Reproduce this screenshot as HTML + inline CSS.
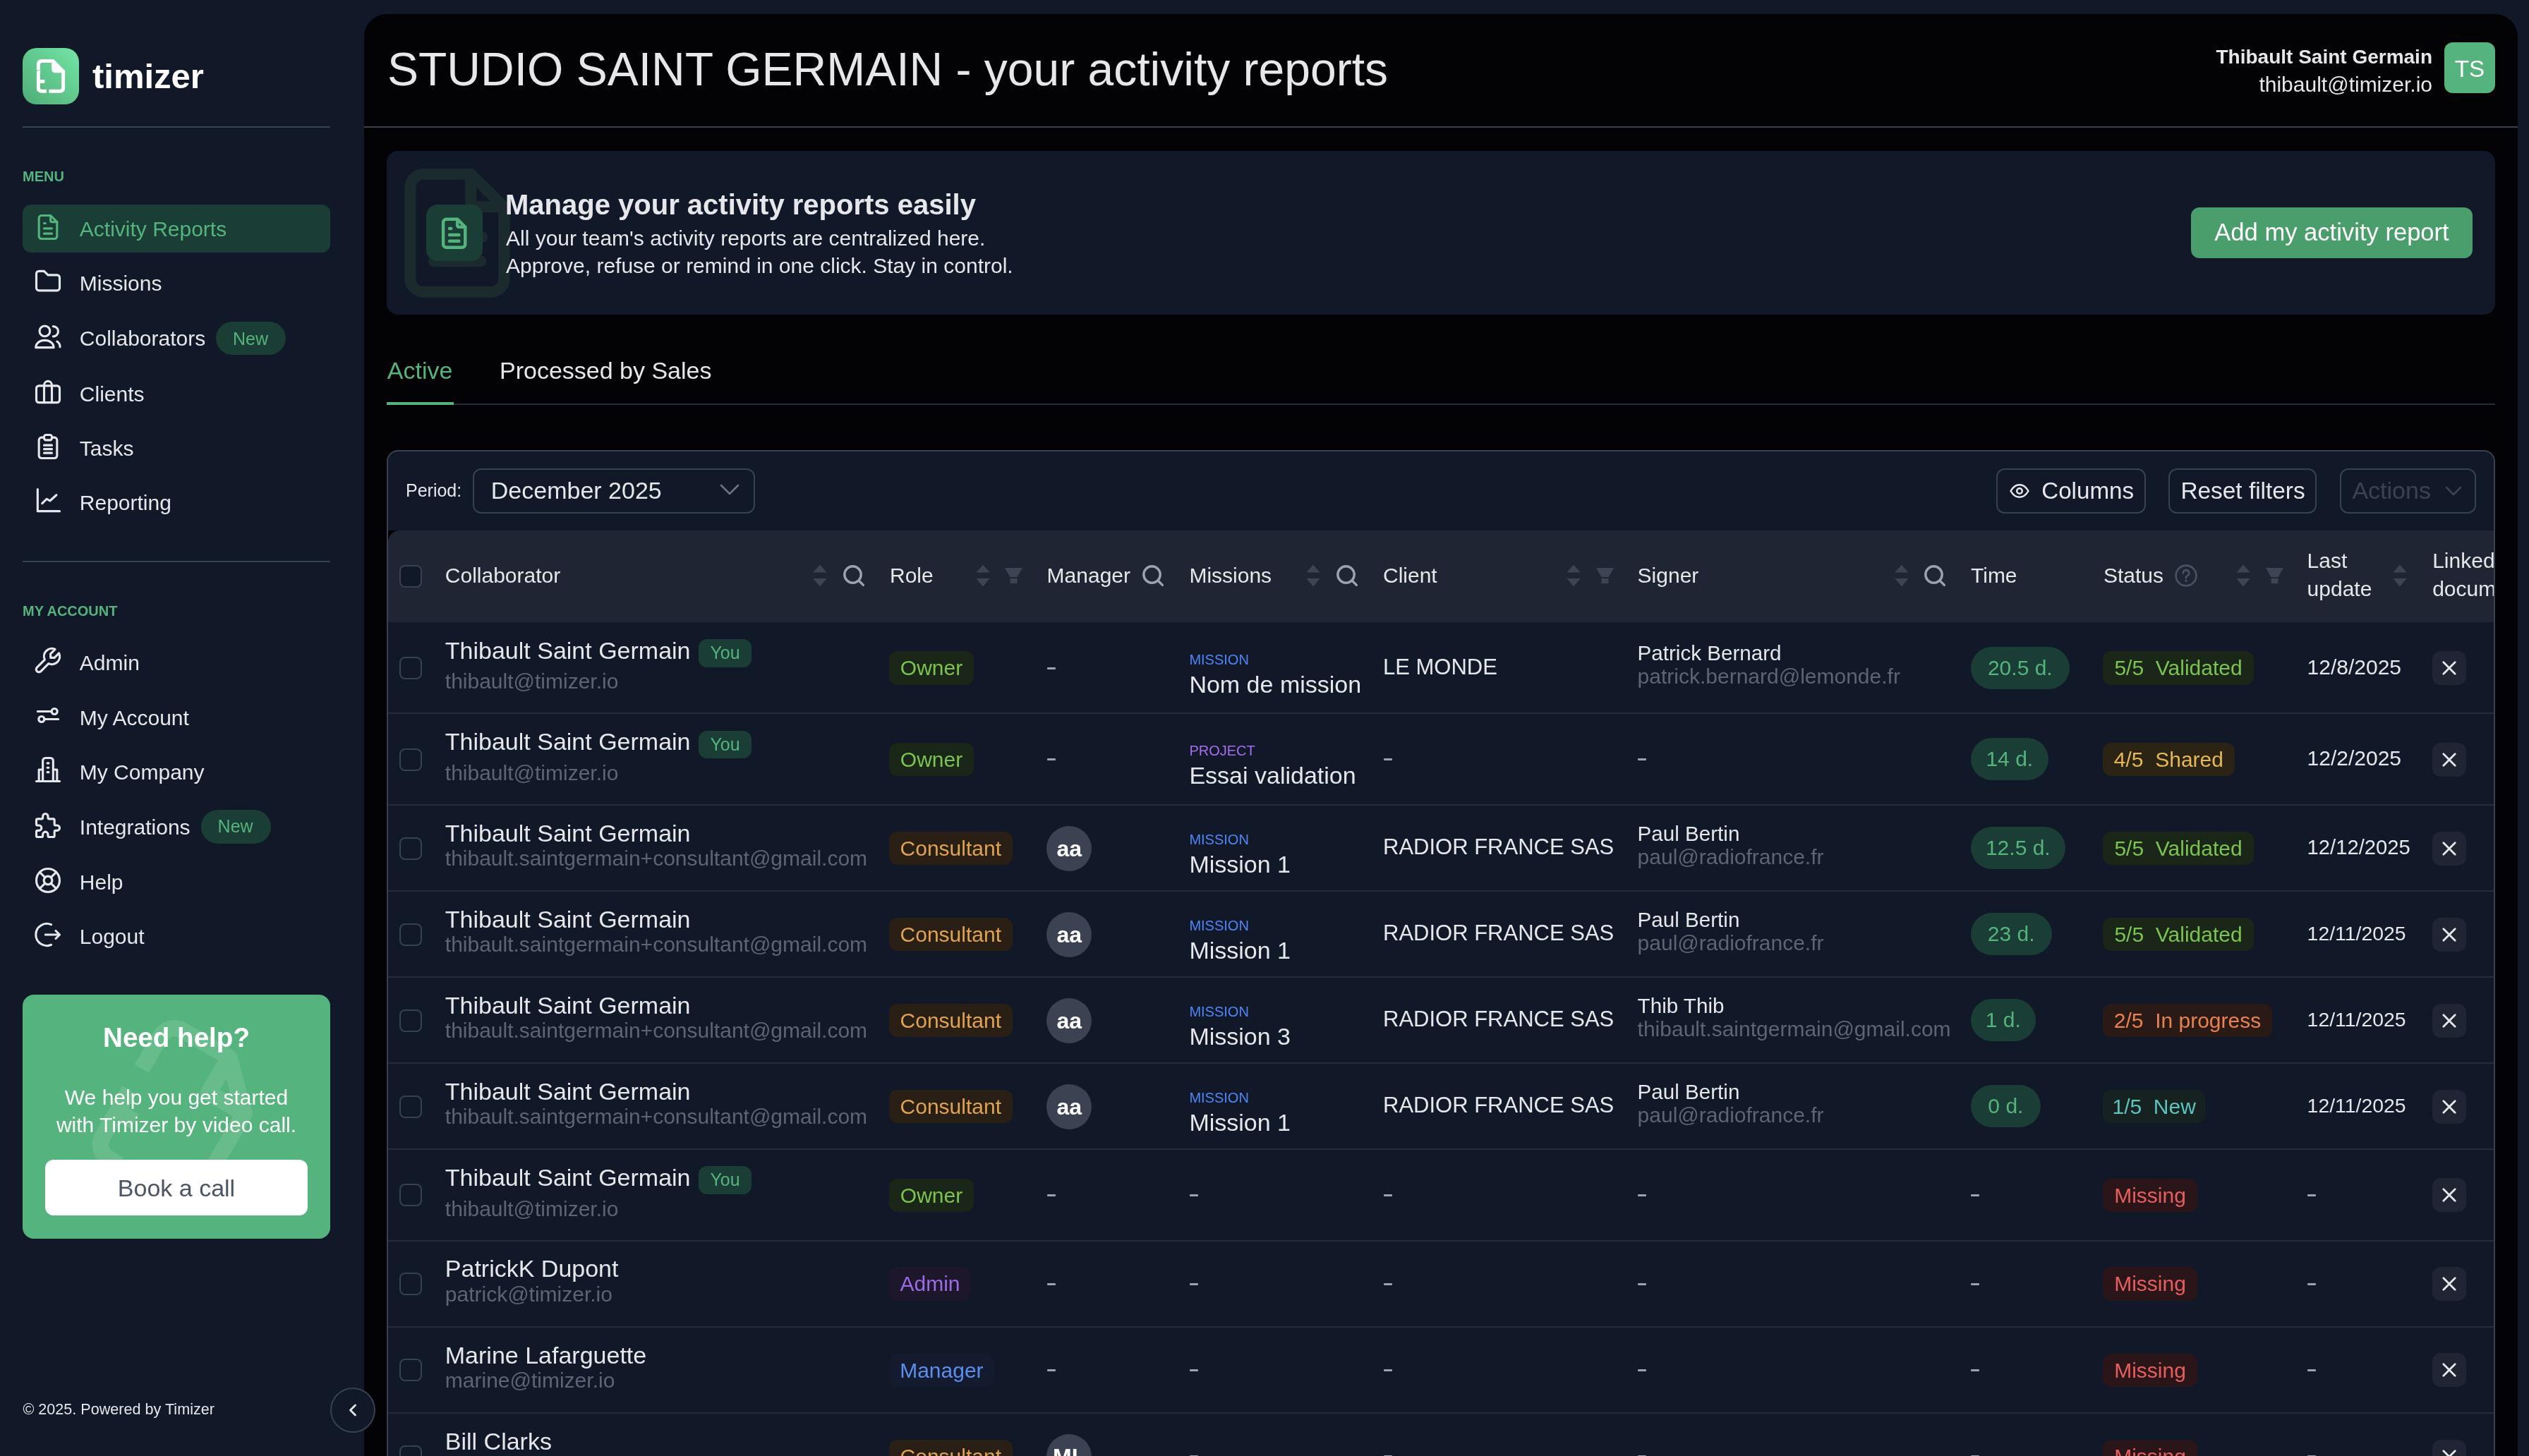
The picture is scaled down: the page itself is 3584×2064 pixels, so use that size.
<!DOCTYPE html>
<html><head><meta charset="utf-8"><title>Timizer</title>
<style>
html,body{margin:0;padding:0;}
body{width:100vw;height:100vh;overflow:hidden;background:#111827;}
#root{will-change:transform;zoom:1;position:relative;width:1792px;height:1032px;overflow:hidden;background:#111827;font-family:"Liberation Sans",sans-serif;}
@media (min-width:2400px){#root{zoom:2;}}
.t{position:absolute;white-space:nowrap;}
svg{display:block;}
</style></head><body><div id="root">
<div style="position:absolute;left:16.00px;top:34.00px;width:40.00px;height:40.00px;border-radius:10px;background:linear-gradient(45deg,#4fac77 0%,#62cb8f 55%,#75e6a7 100%);"></div>
<svg style="position:absolute;left:0;top:0" width="80" height="80" viewBox="0 0 80 80" fill="none"><g stroke="#fff" stroke-width="2.5" stroke-linejoin="round"><path d="M27.2 49.7V45.8Q27.2 43.3 29.7 43.3H37.6"/><path d="M44.8 50.2V62.1Q44.8 64.6 42.3 64.6H34.7"/><path d="M33.0 64.6H29.7Q27.2 64.6 27.2 62.1V51.3H28.6"/><path d="M27.2 57.7H31.7"/></g><path d="M36.6 41.95H38.0L46.05 50.1V51.6H39.2Q36.6 51.6 36.6 49.0Z" fill="#fff"/></svg>
<div class="t" style="left:65.50px;top:38.85px;font-size:24.5px;line-height:30.62px;color:#ffffff;font-weight:700;">timizer</div>
<div style="position:absolute;left:16.00px;top:89.50px;width:218.00px;height:1.00px;background:#374151;"></div>
<div class="t" style="left:16.00px;top:118.98px;font-size:10px;line-height:12.5px;color:#55b47d;font-weight:700;">MENU</div>
<div style="position:absolute;left:16.00px;top:145.00px;width:218.00px;height:34.20px;border-radius:6px;background:#1a3d35;"></div>
<svg style="position:absolute;left:23.20px;top:150.00px;" width="22" height="22" viewBox="0 0 24 24" fill="none"><g stroke="#55b47d" stroke-width="1.7" stroke-linecap="round" stroke-linejoin="round"><path d="M14 3v4a1 1 0 0 0 1 1h4"/><path d="M17 21H7a2 2 0 0 1-2-2V5a2 2 0 0 1 2-2h7l5 5v11a2 2 0 0 1-2 2z"/><path d="M9 9h1M9 13h6M9 17h6"/></g></svg>
<div class="t" style="left:56.40px;top:152.92px;font-size:15px;line-height:18.75px;color:#55b47d;font-weight:400;">Activity Reports</div>
<svg style="position:absolute;left:23.20px;top:188.50px;" width="22" height="22" viewBox="0 0 24 24" fill="none"><path d="M5 4h4l3 3h7a2 2 0 0 1 2 2v8a2 2 0 0 1-2 2H5a2 2 0 0 1-2-2V6a2 2 0 0 1 2-2" stroke="#e5e7eb" stroke-width="1.7" stroke-linejoin="round"/></svg>
<div class="t" style="left:56.40px;top:191.62px;font-size:15px;line-height:18.75px;color:#e5e7eb;font-weight:400;">Missions</div>
<svg style="position:absolute;left:23.20px;top:228.00px;" width="22" height="22" viewBox="0 0 24 24" fill="none"><g stroke="#e5e7eb" stroke-width="1.7" stroke-linecap="round" stroke-linejoin="round"><circle cx="9.5" cy="7.3" r="4"/><path d="M2.6 20c0-3.4 3.1-5.6 6.9-5.6s6.9 2.2 6.9 5.6z"/><path d="M16 3.6a3.9 3.9 0 0 1 0 7.8"/><path d="M19 15.3c1.4.9 2.3 2.3 2.3 4.2"/></g></svg>
<div class="t" style="left:56.40px;top:230.42px;font-size:15px;line-height:18.75px;color:#e5e7eb;font-weight:400;">Collaborators</div>
<svg style="position:absolute;left:23.20px;top:267.00px;" width="22" height="22" viewBox="0 0 24 24" fill="none"><g stroke="#e5e7eb" stroke-width="1.7" stroke-linecap="round" stroke-linejoin="round"><rect x="3" y="7" width="18" height="13" rx="2"/><path d="M9 20V6.5a3 3 0 0 1 6 0V20"/></g></svg>
<div class="t" style="left:56.40px;top:269.82px;font-size:15px;line-height:18.75px;color:#e5e7eb;font-weight:400;">Clients</div>
<svg style="position:absolute;left:23.20px;top:305.60px;" width="22" height="22" viewBox="0 0 24 24" fill="none"><g stroke="#e5e7eb" stroke-width="1.7" stroke-linecap="round" stroke-linejoin="round"><path d="M9 5H7a2 2 0 0 0-2 2v12a2 2 0 0 0 2 2h10a2 2 0 0 0 2-2V7a2 2 0 0 0-2-2h-2"/><rect x="9" y="3" width="6" height="4" rx="1.5"/><path d="M9 11h6M9 14h6M9 17h6"/></g></svg>
<div class="t" style="left:56.40px;top:308.52px;font-size:15px;line-height:18.75px;color:#e5e7eb;font-weight:400;">Tasks</div>
<svg style="position:absolute;left:23.20px;top:344.20px;" width="22" height="22" viewBox="0 0 24 24" fill="none"><g stroke="#e5e7eb" stroke-width="1.7" stroke-linecap="round" stroke-linejoin="round"><path d="M4 3v17h17"/><path d="M7.5 14l3.5-3.5 2.5 1.5 5-4.5"/></g></svg>
<div class="t" style="left:56.40px;top:347.22px;font-size:15px;line-height:18.75px;color:#e5e7eb;font-weight:400;">Reporting</div>
<div style="position:absolute;left:153.20px;top:228.20px;width:49.10px;height:23.50px;border-radius:12px;background:#1a3d35;"></div>
<div class="t" style="left:165.00px;top:232.36px;font-size:12.5px;line-height:15.62px;color:#55b47d;font-weight:400;">New</div>
<div style="position:absolute;left:16.00px;top:397.50px;width:218.00px;height:1.00px;background:#374151;"></div>
<div class="t" style="left:16.00px;top:426.78px;font-size:10px;line-height:12.5px;color:#55b47d;font-weight:700;">MY ACCOUNT</div>
<svg style="position:absolute;left:23.20px;top:457.10px;" width="22" height="22" viewBox="0 0 24 24" fill="none"><path d="M7 10h3V7L6.5 3.5a6 6 0 0 1 8 8l6 6a2 2 0 0 1-3 3l-6-6a6 6 0 0 1-8-8L7 10" stroke="#e5e7eb" stroke-width="1.7" stroke-linecap="round" stroke-linejoin="round" transform="scale(-1,1) translate(-24,0)"/></svg>
<div class="t" style="left:56.40px;top:460.67px;font-size:15px;line-height:18.75px;color:#e5e7eb;font-weight:400;">Admin</div>
<svg style="position:absolute;left:23.20px;top:496.00px;" width="22" height="22" viewBox="0 0 24 24" fill="none"><g stroke="#e5e7eb" stroke-width="1.7" stroke-linecap="round"><circle cx="17" cy="9" r="2.2"/><circle cx="7" cy="15" r="2.2"/><path d="M4 9h10.8M9.2 15H20"/></g></svg>
<div class="t" style="left:56.40px;top:499.42px;font-size:15px;line-height:18.75px;color:#e5e7eb;font-weight:400;">My Account</div>
<svg style="position:absolute;left:23.20px;top:534.50px;" width="22" height="22" viewBox="0 0 24 24" fill="none"><g stroke="#e5e7eb" stroke-width="1.7" stroke-linecap="round" stroke-linejoin="round"><path d="M3 21h18"/><path d="M5 21v-9h3"/><path d="M19 21v-9h-3"/><path d="M8 21V5a2 2 0 0 1 2-2h4a2 2 0 0 1 2 2v16"/><path d="M11.5 7h1M11.5 10.5h1M11.5 14h1"/></g></svg>
<div class="t" style="left:56.40px;top:538.17px;font-size:15px;line-height:18.75px;color:#e5e7eb;font-weight:400;">My Company</div>
<svg style="position:absolute;left:23.20px;top:574.00px;" width="22" height="22" viewBox="0 0 24 24" fill="none"><path d="M4 7h3a1 1 0 0 0 1-1V5a2 2 0 0 1 4 0v1a1 1 0 0 0 1 1h3a1 1 0 0 1 1 1v3a1 1 0 0 0 1 1h1a2 2 0 0 1 0 4h-1a1 1 0 0 0-1 1v3a1 1 0 0 1-1 1h-3a1 1 0 0 1-1-1v-1a2 2 0 0 0-4 0v1a1 1 0 0 1-1 1H4a1 1 0 0 1-1-1v-3a1 1 0 0 1 1-1h1a2 2 0 0 0 0-4H4a1 1 0 0 1-1-1V8a1 1 0 0 1 1-1" stroke="#e5e7eb" stroke-width="1.7" stroke-linejoin="round"/></svg>
<div class="t" style="left:56.40px;top:576.92px;font-size:15px;line-height:18.75px;color:#e5e7eb;font-weight:400;">Integrations</div>
<svg style="position:absolute;left:23.20px;top:613.00px;" width="22" height="22" viewBox="0 0 24 24" fill="none"><g stroke="#e5e7eb" stroke-width="1.7" stroke-linecap="round"><circle cx="12" cy="12" r="9"/><circle cx="12" cy="12" r="3.2"/><path d="M14.3 14.3l4.1 4.1M9.7 14.3l-4.1 4.1M9.7 9.7L5.6 5.6M14.3 9.7l4.1-4.1"/></g></svg>
<div class="t" style="left:56.40px;top:616.17px;font-size:15px;line-height:18.75px;color:#e5e7eb;font-weight:400;">Help</div>
<svg style="position:absolute;left:23.20px;top:651.50px;" width="22" height="22" viewBox="0 0 24 24" fill="none"><g stroke="#e5e7eb" stroke-width="1.7" stroke-linecap="round" stroke-linejoin="round"><path d="M14.5 4.2A8.5 8.5 0 1 0 14.5 19.8"/><path d="M10 12h11M18 9l3 3-3 3"/></g></svg>
<div class="t" style="left:56.40px;top:654.42px;font-size:15px;line-height:18.75px;color:#e5e7eb;font-weight:400;">Logout</div>
<div style="position:absolute;left:142.50px;top:574.00px;width:49.50px;height:23.75px;border-radius:12px;background:#1a3d35;"></div>
<div class="t" style="left:154.30px;top:578.16px;font-size:12.5px;line-height:15.62px;color:#55b47d;font-weight:400;">New</div>
<div style="position:absolute;left:16px;top:705px;width:218px;height:173px;border-radius:8px;background:#55b47d;overflow:hidden"><svg style="position:absolute;left:40px;top:14px" width="140" height="140" viewBox="0 0 24 24" fill="none"><g transform="rotate(30 12 12)" stroke="#fff" opacity="0.11" stroke-width="2.0" stroke-linecap="butt" stroke-linejoin="round"><path d="M5.5 9.5V5a2 2 0 0 1 2-2h6.5l5 5v11a2 2 0 0 1-2 2h-5.5"/><path d="M14 3v5h5"/><path d="M5.5 12.5V19a2 2 0 0 0 2 2h1.5"/><path d="M5.5 15.5h2.5"/></g></svg></div>
<div class="t" style="left:25.00px;width:200px;text-align:center;top:723.25px;font-size:19.3px;line-height:24.12px;color:#ffffff;font-weight:700;">Need help?</div>
<div class="t" style="left:20.00px;width:210px;text-align:center;top:768.42px;font-size:15px;line-height:18.75px;color:#ffffff;font-weight:400;">We help you get started</div>
<div class="t" style="left:20.00px;width:210px;text-align:center;top:788.12px;font-size:15px;line-height:18.75px;color:#ffffff;font-weight:400;">with Timizer by video call.</div>
<div style="position:absolute;left:32.00px;top:822.10px;width:186.00px;height:39.60px;border-radius:6px;background:#ffffff;"></div>
<div class="t" style="left:32.00px;width:186px;text-align:center;top:831.28px;font-size:17px;line-height:21.25px;color:#4b5563;font-weight:400;">Book a call</div>
<div class="t" style="left:16.20px;top:991.91px;font-size:10.8px;line-height:13.5px;color:#e5e7eb;font-weight:400;">© 2025. Powered by Timizer</div>
<div style="position:absolute;left:258.00px;top:10.00px;width:1526.00px;height:1100.00px;border-radius:16px 16px 0 0;background:#030305;"></div>
<div style="position:absolute;left:258.00px;top:89.50px;width:1526.00px;height:1.00px;background:#374151;"></div>
<div class="t" style="left:274.50px;top:28.73px;font-size:33px;line-height:41.25px;color:#e5e7eb;font-weight:400;">STUDIO SAINT GERMAIN - your activity reports</div>
<div class="t" style="right:68.50px;text-align:right;top:31.65px;font-size:14px;line-height:17.5px;color:#e5e7eb;font-weight:700;">Thibault Saint Germain</div>
<div class="t" style="right:68.50px;text-align:right;top:50.42px;font-size:15px;line-height:18.75px;color:#e5e7eb;font-weight:400;">thibault@timizer.io</div>
<div style="position:absolute;left:1732.00px;top:30.00px;width:36.00px;height:36.00px;border-radius:6px;background:#55b47d;"></div>
<div class="t" style="left:1732.00px;width:36px;text-align:center;top:38.27px;font-size:16.6px;line-height:20.75px;color:#ffffff;font-weight:400;">TS</div>
<div style="position:absolute;left:274px;top:107px;width:1494px;height:116px;border-radius:8px;background:#111827;overflow:hidden"></div>
<svg style="position:absolute;left:266.75px;top:109.6px" width="114" height="111.4" viewBox="0 0 24 24" preserveAspectRatio="none" fill="none"><g stroke="#1b2b2d" stroke-width="1.7" stroke-linecap="round" stroke-linejoin="round"><path d="M14 3v4a1 1 0 0 0 1 1h4"/><path d="M17 21H7a2 2 0 0 1-2-2V5a2 2 0 0 1 2-2h7l5 5v11a2 2 0 0 1-2 2z"/><path d="M8.5 12.6h7.2M8.5 16.3h7"/></g></svg>
<div style="position:absolute;left:302.00px;top:145.00px;width:40.00px;height:40.00px;border-radius:8px;background:#1a3d35;"></div>
<svg style="position:absolute;left:308.65px;top:151.80px;" width="26.7" height="26.7" viewBox="0 0 24 24" fill="none"><g stroke="#55b47d" stroke-width="2" stroke-linecap="round" stroke-linejoin="round"><path d="M14 3v4a1 1 0 0 0 1 1h4"/><path d="M17 21H7a2 2 0 0 1-2-2V5a2 2 0 0 1 2-2h7l5 5v11a2 2 0 0 1-2 2z"/><path d="M9 9h1M9 13h6M9 17h6"/></g></svg>
<div class="t" style="left:358.00px;top:132.37px;font-size:20px;line-height:25.0px;color:#e5e7eb;font-weight:700;">Manage your activity reports easily</div>
<div class="t" style="left:358.50px;top:159.42px;font-size:15px;line-height:18.75px;color:#e5e7eb;font-weight:400;">All your team&#39;s activity reports are centralized here.</div>
<div class="t" style="left:358.50px;top:179.12px;font-size:15px;line-height:18.75px;color:#e5e7eb;font-weight:400;">Approve, refuse or remind in one click. Stay in control.</div>
<div style="position:absolute;left:1552.50px;top:147.00px;width:199.50px;height:36.00px;border-radius:6px;background:#4a9e6b;"></div>
<div class="t" style="left:1552.50px;width:199.5px;text-align:center;top:153.79px;font-size:17.3px;line-height:21.62px;color:#ffffff;font-weight:400;">Add my activity report</div>
<div class="t" style="left:274.40px;top:251.98px;font-size:17px;line-height:21.25px;color:#55b47d;font-weight:400;">Active</div>
<div class="t" style="left:354.00px;top:251.98px;font-size:17px;line-height:21.25px;color:#e5e7eb;font-weight:400;">Processed by Sales</div>
<div style="position:absolute;left:274.00px;top:286.00px;width:1494.00px;height:1.00px;background:#252c39;"></div>
<div style="position:absolute;left:274.00px;top:285.00px;width:47.50px;height:2.00px;background:#55b47d;"></div>
<div style="position:absolute;left:274px;top:319px;width:1494px;height:800px;border-radius:8px;border:1px solid #394150;box-sizing:border-box;background:#111827;"></div>
<div class="t" style="left:287.50px;top:340.11px;font-size:12.5px;line-height:15.62px;color:#e5e7eb;font-weight:400;">Period:</div>
<div style="position:absolute;left:335.00px;top:332.00px;width:200.00px;height:32.00px;border-radius:6px;border:1px solid #374151;box-sizing:border-box;"></div>
<div class="t" style="left:347.90px;top:337.23px;font-size:17px;line-height:21.25px;color:#e5e7eb;font-weight:400;">December 2025</div>
<svg style="position:absolute;left:510.00px;top:342.00px;" width="14" height="10" viewBox="0 0 14 10" fill="none"><path d="M1 2l6 6 6-6" stroke="#6b7280" stroke-width="1.3" stroke-linecap="round" stroke-linejoin="round"/></svg>
<div style="position:absolute;left:1414.30px;top:332.00px;width:106.00px;height:32.00px;border-radius:6px;border:1px solid #374151;box-sizing:border-box;"></div>
<svg style="position:absolute;left:1423.50px;top:340.50px;" width="15" height="15" viewBox="0 0 24 24" fill="none"><g stroke="#e5e7eb" stroke-width="2" stroke-linecap="round" stroke-linejoin="round"><circle cx="12" cy="12" r="3"/><path d="M22 12c-2.7 4.7-6 7-10 7s-7.3-2.3-10-7c2.7-4.7 6-7 10-7s7.3 2.3 10 7"/></g></svg>
<div class="t" style="left:1446.60px;top:337.37px;font-size:16.6px;line-height:20.75px;color:#e5e7eb;font-weight:400;">Columns</div>
<div style="position:absolute;left:1536.60px;top:332.00px;width:105.10px;height:32.00px;border-radius:6px;border:1px solid #374151;box-sizing:border-box;"></div>
<div class="t" style="left:1545.20px;top:337.27px;font-size:16.7px;line-height:20.88px;color:#e5e7eb;font-weight:400;">Reset filters</div>
<div style="position:absolute;left:1658.10px;top:332.00px;width:96.60px;height:32.00px;border-radius:6px;border:1px solid #374151;box-sizing:border-box;"></div>
<div class="t" style="left:1666.70px;top:336.98px;font-size:17px;line-height:21.25px;color:#3b4250;font-weight:400;">Actions</div>
<svg style="position:absolute;left:1732.50px;top:344.00px;" width="12" height="8" viewBox="0 0 12 8" fill="none"><path d="M1 1.5l5 5 5-5" stroke="#3b4250" stroke-width="1.3" stroke-linecap="round" stroke-linejoin="round"/></svg>
<div style="position:absolute;left:275.00px;top:376.00px;width:1492.00px;height:65.00px;background:#000000;"></div>
<div style="position:absolute;left:275.00px;top:376.00px;width:1492.00px;height:65.00px;background:#1f2532;border-radius:8px 0 0 0;"></div>
<div style="position:absolute;left:283.00px;top:400.40px;width:16.00px;height:16.00px;border-radius:4px;border:1px solid #374151;box-sizing:border-box;background:#111827;"></div>
<div class="t" style="left:315.40px;top:398.42px;font-size:15px;line-height:18.75px;color:#e5e7eb;font-weight:400;">Collaborator</div>
<svg style="position:absolute;left:576.00px;top:400.00px;" width="10" height="16" viewBox="0 0 10 16" fill="none"><path d="M5 0.2L9.8 5.8H0.2z M5 15.8L9.8 10H0.2z" fill="#3d4453"/></svg>
<svg style="position:absolute;left:597.00px;top:400.00px;" width="16" height="16" viewBox="0 0 16 16" fill="none"><circle cx="7.25" cy="7.25" r="5.85" stroke="#9ca3af" stroke-width="1.7"/><path d="M11.5 11.5l3.2 3.2" stroke="#9ca3af" stroke-width="1.7" stroke-linecap="round"/></svg>
<div class="t" style="left:630.50px;top:398.42px;font-size:15px;line-height:18.75px;color:#e5e7eb;font-weight:400;">Role</div>
<svg style="position:absolute;left:691.40px;top:400.00px;" width="10" height="16" viewBox="0 0 10 16" fill="none"><path d="M5 0.2L9.8 5.8H0.2z M5 15.8L9.8 10H0.2z" fill="#3d4453"/></svg>
<svg style="position:absolute;left:712.15px;top:402.50px;" width="12.5" height="11" viewBox="0 0 12.5 11" fill="none"><path d="M0 0h12.5L8.8 6.5H3.7z" fill="#3d4453"/><rect x="3.75" y="7.5" width="5" height="3.5" fill="#3d4453"/></svg>
<div class="t" style="left:741.80px;top:398.42px;font-size:15px;line-height:18.75px;color:#e5e7eb;font-weight:400;">Manager</div>
<svg style="position:absolute;left:809.00px;top:400.00px;" width="16" height="16" viewBox="0 0 16 16" fill="none"><circle cx="7.25" cy="7.25" r="5.85" stroke="#9ca3af" stroke-width="1.7"/><path d="M11.5 11.5l3.2 3.2" stroke="#9ca3af" stroke-width="1.7" stroke-linecap="round"/></svg>
<div class="t" style="left:842.70px;top:398.42px;font-size:15px;line-height:18.75px;color:#e5e7eb;font-weight:400;">Missions</div>
<svg style="position:absolute;left:925.50px;top:400.00px;" width="10" height="16" viewBox="0 0 10 16" fill="none"><path d="M5 0.2L9.8 5.8H0.2z M5 15.8L9.8 10H0.2z" fill="#3d4453"/></svg>
<svg style="position:absolute;left:946.30px;top:400.00px;" width="16" height="16" viewBox="0 0 16 16" fill="none"><circle cx="7.25" cy="7.25" r="5.85" stroke="#9ca3af" stroke-width="1.7"/><path d="M11.5 11.5l3.2 3.2" stroke="#9ca3af" stroke-width="1.7" stroke-linecap="round"/></svg>
<div class="t" style="left:980.00px;top:398.42px;font-size:15px;line-height:18.75px;color:#e5e7eb;font-weight:400;">Client</div>
<svg style="position:absolute;left:1110.00px;top:400.00px;" width="10" height="16" viewBox="0 0 10 16" fill="none"><path d="M5 0.2L9.8 5.8H0.2z M5 15.8L9.8 10H0.2z" fill="#3d4453"/></svg>
<svg style="position:absolute;left:1130.75px;top:402.50px;" width="12.5" height="11" viewBox="0 0 12.5 11" fill="none"><path d="M0 0h12.5L8.8 6.5H3.7z" fill="#3d4453"/><rect x="3.75" y="7.5" width="5" height="3.5" fill="#3d4453"/></svg>
<div class="t" style="left:1160.30px;top:398.42px;font-size:15px;line-height:18.75px;color:#e5e7eb;font-weight:400;">Signer</div>
<svg style="position:absolute;left:1342.30px;top:400.00px;" width="10" height="16" viewBox="0 0 10 16" fill="none"><path d="M5 0.2L9.8 5.8H0.2z M5 15.8L9.8 10H0.2z" fill="#3d4453"/></svg>
<svg style="position:absolute;left:1363.10px;top:400.00px;" width="16" height="16" viewBox="0 0 16 16" fill="none"><circle cx="7.25" cy="7.25" r="5.85" stroke="#9ca3af" stroke-width="1.7"/><path d="M11.5 11.5l3.2 3.2" stroke="#9ca3af" stroke-width="1.7" stroke-linecap="round"/></svg>
<div class="t" style="left:1396.50px;top:398.42px;font-size:15px;line-height:18.75px;color:#e5e7eb;font-weight:400;">Time</div>
<div class="t" style="left:1490.50px;top:398.42px;font-size:15px;line-height:18.75px;color:#e5e7eb;font-weight:400;">Status</div>
<svg style="position:absolute;left:1541.00px;top:400.00px;" width="16" height="16" viewBox="0 0 16 16" fill="none"><circle cx="8" cy="8" r="7.2" stroke="#4b5263" stroke-width="1.3"/><path d="M5.9 6.2a2.1 2.1 0 1 1 3 1.9c-.6.3-.9.7-.9 1.3v.4" stroke="#4b5263" stroke-width="1.3" stroke-linecap="round"/><circle cx="8" cy="11.7" r=".8" fill="#4b5263"/></svg>
<svg style="position:absolute;left:1584.50px;top:400.00px;" width="10" height="16" viewBox="0 0 10 16" fill="none"><path d="M5 0.2L9.8 5.8H0.2z M5 15.8L9.8 10H0.2z" fill="#3d4453"/></svg>
<svg style="position:absolute;left:1605.25px;top:402.50px;" width="12.5" height="11" viewBox="0 0 12.5 11" fill="none"><path d="M0 0h12.5L8.8 6.5H3.7z" fill="#3d4453"/><rect x="3.75" y="7.5" width="5" height="3.5" fill="#3d4453"/></svg>
<div class="t" style="left:1634.80px;top:388.17px;font-size:15px;line-height:18.75px;color:#e5e7eb;font-weight:400;">Last</div>
<div class="t" style="left:1634.80px;top:408.02px;font-size:15px;line-height:18.75px;color:#e5e7eb;font-weight:400;">update</div>
<svg style="position:absolute;left:1695.40px;top:400.00px;" width="10" height="16" viewBox="0 0 10 16" fill="none"><path d="M5 0.2L9.8 5.8H0.2z M5 15.8L9.8 10H0.2z" fill="#3d4453"/></svg>
<div style="position:absolute;left:1700px;top:376px;width:67px;height:65px;overflow:hidden">
<div class="t" style="left:23.60px;top:12.17px;font-size:15px;line-height:18.75px;color:#e5e7eb;font-weight:400;">Linked</div>
<div class="t" style="left:23.60px;top:32.02px;font-size:15px;line-height:18.75px;color:#e5e7eb;font-weight:400;">documents</div>
</div>
<div style="position:absolute;left:283.00px;top:465.55px;width:16.00px;height:16.00px;border-radius:4px;border:1px solid #374151;box-sizing:border-box;background:#111827;"></div>
<div class="t" style="left:315.40px;top:450.48px;font-size:17px;line-height:21.25px;color:#e5e7eb;font-weight:400;">Thibault Saint Germain</div>
<div class="t" style="left:315.40px;top:473.62px;font-size:15px;line-height:18.75px;color:#5d6472;font-weight:400;">thibault@timizer.io</div>
<div class="t" style="left:495.00px;top:453.10px;width:37.5px;text-align:center;height:19.7px;line-height:19.7px;border-radius:6px;background:#1a3d35;color:#55b47d;font-size:12.5px;">You</div>
<div class="t" style="left:630.00px;top:461.70px;width:60px;text-align:center;height:23.7px;line-height:23.7px;border-radius:6px;background:#1a2617;color:#7cc34f;font-size:15px;">Owner</div>
<div style="position:absolute;left:742.20px;top:472.80px;width:5.80px;height:1.50px;background:#9ca3af;border-radius:0.5px;"></div>
<div class="t" style="left:842.70px;top:461.33px;font-size:10px;line-height:12.5px;color:#4f86f7;font-weight:400;">MISSION</div>
<div class="t" style="left:842.70px;top:474.33px;font-size:17px;line-height:21.25px;color:#e5e7eb;font-weight:400;">Nom de mission</div>
<div class="t" style="left:980.00px;top:463.44px;font-size:15.5px;line-height:19.38px;color:#e5e7eb;font-weight:400;">LE MONDE</div>
<div class="t" style="left:1160.30px;top:453.52px;font-size:14.8px;line-height:18.5px;color:#e5e7eb;font-weight:400;">Patrick Bernard</div>
<div class="t" style="left:1160.30px;top:470.17px;font-size:15px;line-height:18.75px;color:#5d6472;font-weight:400;">patrick.bernard@lemonde.fr</div>
<div class="t" style="left:1396.4px;top:458.25px;width:70px;text-align:center;height:30px;line-height:30px;border-radius:15px;background:#1a3d35;color:#55b47d;font-size:15px;">20.5 d.</div>
<div class="t" style="left:1490.00px;top:461.70px;width:107px;text-align:center;height:23.7px;line-height:23.7px;border-radius:6px;background:#1a2617;color:#7cc34f;font-size:15px;">5/5&nbsp; Validated</div>
<div class="t" style="left:1634.80px;top:463.27px;font-size:15px;line-height:18.75px;color:#e5e7eb;font-weight:400;">12/8/2025</div>
<div style="position:absolute;left:1723.50px;top:461.55px;width:24.00px;height:24.00px;border-radius:6px;background:#1f2532;"></div>
<svg style="position:absolute;left:1728.50px;top:466.55px;" width="14" height="14" viewBox="0 0 14 14" fill="none"><path d="M2.9 2.9l8.2 8.2M11.1 2.9l-8.2 8.2" stroke="#e5e7eb" stroke-width="1.4" stroke-linecap="round"/></svg>
<div style="position:absolute;left:275.00px;top:505.00px;width:1492.00px;height:1.00px;background:#252c39;"></div>
<div style="position:absolute;left:283.00px;top:530.30px;width:16.00px;height:16.00px;border-radius:4px;border:1px solid #374151;box-sizing:border-box;background:#111827;"></div>
<div class="t" style="left:315.40px;top:515.23px;font-size:17px;line-height:21.25px;color:#e5e7eb;font-weight:400;">Thibault Saint Germain</div>
<div class="t" style="left:315.40px;top:538.37px;font-size:15px;line-height:18.75px;color:#5d6472;font-weight:400;">thibault@timizer.io</div>
<div class="t" style="left:495.00px;top:517.85px;width:37.5px;text-align:center;height:19.7px;line-height:19.7px;border-radius:6px;background:#1a3d35;color:#55b47d;font-size:12.5px;">You</div>
<div class="t" style="left:630.00px;top:526.45px;width:60px;text-align:center;height:23.7px;line-height:23.7px;border-radius:6px;background:#1a2617;color:#7cc34f;font-size:15px;">Owner</div>
<div style="position:absolute;left:742.20px;top:537.55px;width:5.80px;height:1.50px;background:#9ca3af;border-radius:0.5px;"></div>
<div class="t" style="left:842.70px;top:526.08px;font-size:10px;line-height:12.5px;color:#a46df0;font-weight:400;">PROJECT</div>
<div class="t" style="left:842.70px;top:539.08px;font-size:17px;line-height:21.25px;color:#e5e7eb;font-weight:400;">Essai validation</div>
<div style="position:absolute;left:980.70px;top:537.55px;width:5.80px;height:1.50px;background:#9ca3af;border-radius:0.5px;"></div>
<div style="position:absolute;left:1160.70px;top:537.55px;width:5.80px;height:1.50px;background:#9ca3af;border-radius:0.5px;"></div>
<div class="t" style="left:1396.4px;top:523.00px;width:55px;text-align:center;height:30px;line-height:30px;border-radius:15px;background:#1a3d35;color:#55b47d;font-size:15px;">14 d.</div>
<div class="t" style="left:1490.00px;top:526.45px;width:93.4px;text-align:center;height:23.7px;line-height:23.7px;border-radius:6px;background:#2b2314;color:#e6b752;font-size:15px;">4/5&nbsp; Shared</div>
<div class="t" style="left:1634.80px;top:528.02px;font-size:15px;line-height:18.75px;color:#e5e7eb;font-weight:400;">12/2/2025</div>
<div style="position:absolute;left:1723.50px;top:526.30px;width:24.00px;height:24.00px;border-radius:6px;background:#1f2532;"></div>
<svg style="position:absolute;left:1728.50px;top:531.30px;" width="14" height="14" viewBox="0 0 14 14" fill="none"><path d="M2.9 2.9l8.2 8.2M11.1 2.9l-8.2 8.2" stroke="#e5e7eb" stroke-width="1.4" stroke-linecap="round"/></svg>
<div style="position:absolute;left:275.00px;top:570.00px;width:1492.00px;height:1.00px;background:#252c39;"></div>
<div style="position:absolute;left:283.00px;top:593.30px;width:16.00px;height:16.00px;border-radius:4px;border:1px solid #374151;box-sizing:border-box;background:#111827;"></div>
<div class="t" style="left:315.40px;top:579.98px;font-size:17px;line-height:21.25px;color:#e5e7eb;font-weight:400;">Thibault Saint Germain</div>
<div class="t" style="left:315.40px;top:599.22px;font-size:15px;line-height:18.75px;color:#5d6472;font-weight:400;">thibault.saintgermain+consultant@gmail.com</div>
<div class="t" style="left:630.00px;top:589.45px;width:87.3px;text-align:center;height:23.7px;line-height:23.7px;border-radius:6px;background:#2a1f15;color:#e0a352;font-size:15px;">Consultant</div>
<div style="position:absolute;left:741.60px;top:585.40px;width:32.00px;height:32.00px;border-radius:50%;background:#3b4252;"></div>
<div class="t" style="left:741.60px;width:32px;text-align:center;top:591.45px;font-size:16px;line-height:20.0px;color:#ffffff;font-weight:700;">aa</div>
<div class="t" style="left:842.70px;top:589.08px;font-size:10px;line-height:12.5px;color:#4f86f7;font-weight:400;">MISSION</div>
<div class="t" style="left:842.70px;top:602.08px;font-size:17px;line-height:21.25px;color:#e5e7eb;font-weight:400;">Mission 1</div>
<div class="t" style="left:980.00px;top:591.19px;font-size:15.5px;line-height:19.38px;color:#e5e7eb;font-weight:400;">RADIOR FRANCE SAS</div>
<div class="t" style="left:1160.30px;top:581.27px;font-size:14.8px;line-height:18.5px;color:#e5e7eb;font-weight:400;">Paul Bertin</div>
<div class="t" style="left:1160.30px;top:597.92px;font-size:15px;line-height:18.75px;color:#5d6472;font-weight:400;">paul@radiofrance.fr</div>
<div class="t" style="left:1396.4px;top:586.00px;width:67px;text-align:center;height:30px;line-height:30px;border-radius:15px;background:#1a3d35;color:#55b47d;font-size:15px;">12.5 d.</div>
<div class="t" style="left:1490.00px;top:589.45px;width:107px;text-align:center;height:23.7px;line-height:23.7px;border-radius:6px;background:#1a2617;color:#7cc34f;font-size:15px;">5/5&nbsp; Validated</div>
<div class="t" style="left:1634.80px;top:591.41px;font-size:14.6px;line-height:18.25px;color:#e5e7eb;font-weight:400;">12/12/2025</div>
<div style="position:absolute;left:1723.50px;top:589.30px;width:24.00px;height:24.00px;border-radius:6px;background:#1f2532;"></div>
<svg style="position:absolute;left:1728.50px;top:594.30px;" width="14" height="14" viewBox="0 0 14 14" fill="none"><path d="M2.9 2.9l8.2 8.2M11.1 2.9l-8.2 8.2" stroke="#e5e7eb" stroke-width="1.4" stroke-linecap="round"/></svg>
<div style="position:absolute;left:275.00px;top:631.00px;width:1492.00px;height:1.00px;background:#252c39;"></div>
<div style="position:absolute;left:283.00px;top:654.30px;width:16.00px;height:16.00px;border-radius:4px;border:1px solid #374151;box-sizing:border-box;background:#111827;"></div>
<div class="t" style="left:315.40px;top:640.98px;font-size:17px;line-height:21.25px;color:#e5e7eb;font-weight:400;">Thibault Saint Germain</div>
<div class="t" style="left:315.40px;top:660.22px;font-size:15px;line-height:18.75px;color:#5d6472;font-weight:400;">thibault.saintgermain+consultant@gmail.com</div>
<div class="t" style="left:630.00px;top:650.45px;width:87.3px;text-align:center;height:23.7px;line-height:23.7px;border-radius:6px;background:#2a1f15;color:#e0a352;font-size:15px;">Consultant</div>
<div style="position:absolute;left:741.60px;top:646.40px;width:32.00px;height:32.00px;border-radius:50%;background:#3b4252;"></div>
<div class="t" style="left:741.60px;width:32px;text-align:center;top:652.45px;font-size:16px;line-height:20.0px;color:#ffffff;font-weight:700;">aa</div>
<div class="t" style="left:842.70px;top:650.08px;font-size:10px;line-height:12.5px;color:#4f86f7;font-weight:400;">MISSION</div>
<div class="t" style="left:842.70px;top:663.08px;font-size:17px;line-height:21.25px;color:#e5e7eb;font-weight:400;">Mission 1</div>
<div class="t" style="left:980.00px;top:652.19px;font-size:15.5px;line-height:19.38px;color:#e5e7eb;font-weight:400;">RADIOR FRANCE SAS</div>
<div class="t" style="left:1160.30px;top:642.27px;font-size:14.8px;line-height:18.5px;color:#e5e7eb;font-weight:400;">Paul Bertin</div>
<div class="t" style="left:1160.30px;top:658.92px;font-size:15px;line-height:18.75px;color:#5d6472;font-weight:400;">paul@radiofrance.fr</div>
<div class="t" style="left:1396.4px;top:647.00px;width:57.4px;text-align:center;height:30px;line-height:30px;border-radius:15px;background:#1a3d35;color:#55b47d;font-size:15px;">23 d.</div>
<div class="t" style="left:1490.00px;top:650.45px;width:107px;text-align:center;height:23.7px;line-height:23.7px;border-radius:6px;background:#1a2617;color:#7cc34f;font-size:15px;">5/5&nbsp; Validated</div>
<div class="t" style="left:1634.80px;top:652.80px;font-size:14.2px;line-height:17.75px;color:#e5e7eb;font-weight:400;">12/11/2025</div>
<div style="position:absolute;left:1723.50px;top:650.30px;width:24.00px;height:24.00px;border-radius:6px;background:#1f2532;"></div>
<svg style="position:absolute;left:1728.50px;top:655.30px;" width="14" height="14" viewBox="0 0 14 14" fill="none"><path d="M2.9 2.9l8.2 8.2M11.1 2.9l-8.2 8.2" stroke="#e5e7eb" stroke-width="1.4" stroke-linecap="round"/></svg>
<div style="position:absolute;left:275.00px;top:692.00px;width:1492.00px;height:1.00px;background:#252c39;"></div>
<div style="position:absolute;left:283.00px;top:715.30px;width:16.00px;height:16.00px;border-radius:4px;border:1px solid #374151;box-sizing:border-box;background:#111827;"></div>
<div class="t" style="left:315.40px;top:701.98px;font-size:17px;line-height:21.25px;color:#e5e7eb;font-weight:400;">Thibault Saint Germain</div>
<div class="t" style="left:315.40px;top:721.22px;font-size:15px;line-height:18.75px;color:#5d6472;font-weight:400;">thibault.saintgermain+consultant@gmail.com</div>
<div class="t" style="left:630.00px;top:711.45px;width:87.3px;text-align:center;height:23.7px;line-height:23.7px;border-radius:6px;background:#2a1f15;color:#e0a352;font-size:15px;">Consultant</div>
<div style="position:absolute;left:741.60px;top:707.40px;width:32.00px;height:32.00px;border-radius:50%;background:#3b4252;"></div>
<div class="t" style="left:741.60px;width:32px;text-align:center;top:713.45px;font-size:16px;line-height:20.0px;color:#ffffff;font-weight:700;">aa</div>
<div class="t" style="left:842.70px;top:711.08px;font-size:10px;line-height:12.5px;color:#4f86f7;font-weight:400;">MISSION</div>
<div class="t" style="left:842.70px;top:724.08px;font-size:17px;line-height:21.25px;color:#e5e7eb;font-weight:400;">Mission 3</div>
<div class="t" style="left:980.00px;top:713.19px;font-size:15.5px;line-height:19.38px;color:#e5e7eb;font-weight:400;">RADIOR FRANCE SAS</div>
<div class="t" style="left:1160.30px;top:703.27px;font-size:14.8px;line-height:18.5px;color:#e5e7eb;font-weight:400;">Thib Thib</div>
<div class="t" style="left:1160.30px;top:719.92px;font-size:15px;line-height:18.75px;color:#5d6472;font-weight:400;">thibault.saintgermain@gmail.com</div>
<div class="t" style="left:1396.4px;top:708.00px;width:46px;text-align:center;height:30px;line-height:30px;border-radius:15px;background:#1a3d35;color:#55b47d;font-size:15px;">1 d.</div>
<div class="t" style="left:1490.00px;top:711.45px;width:120px;text-align:center;height:23.7px;line-height:23.7px;border-radius:6px;background:#2a1a16;color:#e98150;font-size:15px;">2/5&nbsp; In progress</div>
<div class="t" style="left:1634.80px;top:713.80px;font-size:14.2px;line-height:17.75px;color:#e5e7eb;font-weight:400;">12/11/2025</div>
<div style="position:absolute;left:1723.50px;top:711.30px;width:24.00px;height:24.00px;border-radius:6px;background:#1f2532;"></div>
<svg style="position:absolute;left:1728.50px;top:716.30px;" width="14" height="14" viewBox="0 0 14 14" fill="none"><path d="M2.9 2.9l8.2 8.2M11.1 2.9l-8.2 8.2" stroke="#e5e7eb" stroke-width="1.4" stroke-linecap="round"/></svg>
<div style="position:absolute;left:275.00px;top:753.00px;width:1492.00px;height:1.00px;background:#252c39;"></div>
<div style="position:absolute;left:283.00px;top:776.30px;width:16.00px;height:16.00px;border-radius:4px;border:1px solid #374151;box-sizing:border-box;background:#111827;"></div>
<div class="t" style="left:315.40px;top:762.98px;font-size:17px;line-height:21.25px;color:#e5e7eb;font-weight:400;">Thibault Saint Germain</div>
<div class="t" style="left:315.40px;top:782.22px;font-size:15px;line-height:18.75px;color:#5d6472;font-weight:400;">thibault.saintgermain+consultant@gmail.com</div>
<div class="t" style="left:630.00px;top:772.45px;width:87.3px;text-align:center;height:23.7px;line-height:23.7px;border-radius:6px;background:#2a1f15;color:#e0a352;font-size:15px;">Consultant</div>
<div style="position:absolute;left:741.60px;top:768.40px;width:32.00px;height:32.00px;border-radius:50%;background:#3b4252;"></div>
<div class="t" style="left:741.60px;width:32px;text-align:center;top:774.45px;font-size:16px;line-height:20.0px;color:#ffffff;font-weight:700;">aa</div>
<div class="t" style="left:842.70px;top:772.08px;font-size:10px;line-height:12.5px;color:#4f86f7;font-weight:400;">MISSION</div>
<div class="t" style="left:842.70px;top:785.08px;font-size:17px;line-height:21.25px;color:#e5e7eb;font-weight:400;">Mission 1</div>
<div class="t" style="left:980.00px;top:774.19px;font-size:15.5px;line-height:19.38px;color:#e5e7eb;font-weight:400;">RADIOR FRANCE SAS</div>
<div class="t" style="left:1160.30px;top:764.27px;font-size:14.8px;line-height:18.5px;color:#e5e7eb;font-weight:400;">Paul Bertin</div>
<div class="t" style="left:1160.30px;top:780.92px;font-size:15px;line-height:18.75px;color:#5d6472;font-weight:400;">paul@radiofrance.fr</div>
<div class="t" style="left:1396.4px;top:769.00px;width:49.6px;text-align:center;height:30px;line-height:30px;border-radius:15px;background:#1a3d35;color:#55b47d;font-size:15px;">0 d.</div>
<div class="t" style="left:1490.00px;top:772.45px;width:72.7px;text-align:center;height:23.7px;line-height:23.7px;border-radius:6px;background:#16221f;color:#5cc4bf;font-size:15px;">1/5&nbsp; New</div>
<div class="t" style="left:1634.80px;top:774.80px;font-size:14.2px;line-height:17.75px;color:#e5e7eb;font-weight:400;">12/11/2025</div>
<div style="position:absolute;left:1723.50px;top:772.30px;width:24.00px;height:24.00px;border-radius:6px;background:#1f2532;"></div>
<svg style="position:absolute;left:1728.50px;top:777.30px;" width="14" height="14" viewBox="0 0 14 14" fill="none"><path d="M2.9 2.9l8.2 8.2M11.1 2.9l-8.2 8.2" stroke="#e5e7eb" stroke-width="1.4" stroke-linecap="round"/></svg>
<div style="position:absolute;left:275.00px;top:814.00px;width:1492.00px;height:1.00px;background:#252c39;"></div>
<div style="position:absolute;left:283.00px;top:839.17px;width:16.00px;height:16.00px;border-radius:4px;border:1px solid #374151;box-sizing:border-box;background:#111827;"></div>
<div class="t" style="left:315.40px;top:824.11px;font-size:17px;line-height:21.25px;color:#e5e7eb;font-weight:400;">Thibault Saint Germain</div>
<div class="t" style="left:315.40px;top:847.25px;font-size:15px;line-height:18.75px;color:#5d6472;font-weight:400;">thibault@timizer.io</div>
<div class="t" style="left:495.00px;top:826.73px;width:37.5px;text-align:center;height:19.7px;line-height:19.7px;border-radius:6px;background:#1a3d35;color:#55b47d;font-size:12.5px;">You</div>
<div class="t" style="left:630.00px;top:835.32px;width:60px;text-align:center;height:23.7px;line-height:23.7px;border-radius:6px;background:#1a2617;color:#7cc34f;font-size:15px;">Owner</div>
<div style="position:absolute;left:742.20px;top:846.42px;width:5.80px;height:1.50px;background:#9ca3af;border-radius:0.5px;"></div>
<div style="position:absolute;left:843.20px;top:846.42px;width:5.80px;height:1.50px;background:#9ca3af;border-radius:0.5px;"></div>
<div style="position:absolute;left:980.70px;top:846.42px;width:5.80px;height:1.50px;background:#9ca3af;border-radius:0.5px;"></div>
<div style="position:absolute;left:1160.70px;top:846.42px;width:5.80px;height:1.50px;background:#9ca3af;border-radius:0.5px;"></div>
<div style="position:absolute;left:1396.70px;top:846.42px;width:5.80px;height:1.50px;background:#9ca3af;border-radius:0.5px;"></div>
<div class="t" style="left:1490.00px;top:835.32px;width:67px;text-align:center;height:23.7px;line-height:23.7px;border-radius:6px;background:#2a1619;color:#e85d5d;font-size:15px;">Missing</div>
<div style="position:absolute;left:1635.20px;top:846.42px;width:5.80px;height:1.50px;background:#9ca3af;border-radius:0.5px;"></div>
<div style="position:absolute;left:1723.50px;top:835.17px;width:24.00px;height:24.00px;border-radius:6px;background:#1f2532;"></div>
<svg style="position:absolute;left:1728.50px;top:840.17px;" width="14" height="14" viewBox="0 0 14 14" fill="none"><path d="M2.9 2.9l8.2 8.2M11.1 2.9l-8.2 8.2" stroke="#e5e7eb" stroke-width="1.4" stroke-linecap="round"/></svg>
<div style="position:absolute;left:275.00px;top:878.75px;width:1492.00px;height:1.00px;background:#252c39;"></div>
<div style="position:absolute;left:283.00px;top:902.05px;width:16.00px;height:16.00px;border-radius:4px;border:1px solid #374151;box-sizing:border-box;background:#111827;"></div>
<div class="t" style="left:315.40px;top:888.73px;font-size:17px;line-height:21.25px;color:#e5e7eb;font-weight:400;">PatrickK Dupont</div>
<div class="t" style="left:315.40px;top:907.97px;font-size:15px;line-height:18.75px;color:#5d6472;font-weight:400;">patrick@timizer.io</div>
<div class="t" style="left:630.00px;top:898.20px;width:58px;text-align:center;height:23.7px;line-height:23.7px;border-radius:6px;background:#1d172b;color:#9b6ce6;font-size:15px;">Admin</div>
<div style="position:absolute;left:742.20px;top:909.30px;width:5.80px;height:1.50px;background:#9ca3af;border-radius:0.5px;"></div>
<div style="position:absolute;left:843.20px;top:909.30px;width:5.80px;height:1.50px;background:#9ca3af;border-radius:0.5px;"></div>
<div style="position:absolute;left:980.70px;top:909.30px;width:5.80px;height:1.50px;background:#9ca3af;border-radius:0.5px;"></div>
<div style="position:absolute;left:1160.70px;top:909.30px;width:5.80px;height:1.50px;background:#9ca3af;border-radius:0.5px;"></div>
<div style="position:absolute;left:1396.70px;top:909.30px;width:5.80px;height:1.50px;background:#9ca3af;border-radius:0.5px;"></div>
<div class="t" style="left:1490.00px;top:898.20px;width:67px;text-align:center;height:23.7px;line-height:23.7px;border-radius:6px;background:#2a1619;color:#e85d5d;font-size:15px;">Missing</div>
<div style="position:absolute;left:1635.20px;top:909.30px;width:5.80px;height:1.50px;background:#9ca3af;border-radius:0.5px;"></div>
<div style="position:absolute;left:1723.50px;top:898.05px;width:24.00px;height:24.00px;border-radius:6px;background:#1f2532;"></div>
<svg style="position:absolute;left:1728.50px;top:903.05px;" width="14" height="14" viewBox="0 0 14 14" fill="none"><path d="M2.9 2.9l8.2 8.2M11.1 2.9l-8.2 8.2" stroke="#e5e7eb" stroke-width="1.4" stroke-linecap="round"/></svg>
<div style="position:absolute;left:275.00px;top:939.75px;width:1492.00px;height:1.00px;background:#252c39;"></div>
<div style="position:absolute;left:283.00px;top:963.17px;width:16.00px;height:16.00px;border-radius:4px;border:1px solid #374151;box-sizing:border-box;background:#111827;"></div>
<div class="t" style="left:315.40px;top:949.86px;font-size:17px;line-height:21.25px;color:#e5e7eb;font-weight:400;">Marine Lafarguette</div>
<div class="t" style="left:315.40px;top:969.10px;font-size:15px;line-height:18.75px;color:#5d6472;font-weight:400;">marine@timizer.io</div>
<div class="t" style="left:630.00px;top:959.32px;width:74.4px;text-align:center;height:23.7px;line-height:23.7px;border-radius:6px;background:#141b2e;color:#5b8eef;font-size:15px;">Manager</div>
<div style="position:absolute;left:742.20px;top:970.42px;width:5.80px;height:1.50px;background:#9ca3af;border-radius:0.5px;"></div>
<div style="position:absolute;left:843.20px;top:970.42px;width:5.80px;height:1.50px;background:#9ca3af;border-radius:0.5px;"></div>
<div style="position:absolute;left:980.70px;top:970.42px;width:5.80px;height:1.50px;background:#9ca3af;border-radius:0.5px;"></div>
<div style="position:absolute;left:1160.70px;top:970.42px;width:5.80px;height:1.50px;background:#9ca3af;border-radius:0.5px;"></div>
<div style="position:absolute;left:1396.70px;top:970.42px;width:5.80px;height:1.50px;background:#9ca3af;border-radius:0.5px;"></div>
<div class="t" style="left:1490.00px;top:959.32px;width:67px;text-align:center;height:23.7px;line-height:23.7px;border-radius:6px;background:#2a1619;color:#e85d5d;font-size:15px;">Missing</div>
<div style="position:absolute;left:1635.20px;top:970.42px;width:5.80px;height:1.50px;background:#9ca3af;border-radius:0.5px;"></div>
<div style="position:absolute;left:1723.50px;top:959.17px;width:24.00px;height:24.00px;border-radius:6px;background:#1f2532;"></div>
<svg style="position:absolute;left:1728.50px;top:964.17px;" width="14" height="14" viewBox="0 0 14 14" fill="none"><path d="M2.9 2.9l8.2 8.2M11.1 2.9l-8.2 8.2" stroke="#e5e7eb" stroke-width="1.4" stroke-linecap="round"/></svg>
<div style="position:absolute;left:275.00px;top:1001.00px;width:1492.00px;height:1.00px;background:#252c39;"></div>
<div style="position:absolute;left:283.00px;top:1024.30px;width:16.00px;height:16.00px;border-radius:4px;border:1px solid #374151;box-sizing:border-box;background:#111827;"></div>
<div class="t" style="left:315.40px;top:1010.98px;font-size:17px;line-height:21.25px;color:#e5e7eb;font-weight:400;">Bill Clarks</div>
<div class="t" style="left:315.40px;top:1030.22px;font-size:15px;line-height:18.75px;color:#5d6472;font-weight:400;">bill@timizer.io</div>
<div class="t" style="left:630.00px;top:1020.45px;width:87.3px;text-align:center;height:23.7px;line-height:23.7px;border-radius:6px;background:#2a1f15;color:#e0a352;font-size:15px;">Consultant</div>
<div style="position:absolute;left:741.60px;top:1016.40px;width:32.00px;height:32.00px;border-radius:50%;background:#3b4252;"></div>
<div class="t" style="left:741.60px;width:32px;text-align:center;top:1022.45px;font-size:16px;line-height:20.0px;color:#ffffff;font-weight:700;">ML</div>
<div style="position:absolute;left:843.20px;top:1031.55px;width:5.80px;height:1.50px;background:#9ca3af;border-radius:0.5px;"></div>
<div style="position:absolute;left:980.70px;top:1031.55px;width:5.80px;height:1.50px;background:#9ca3af;border-radius:0.5px;"></div>
<div style="position:absolute;left:1160.70px;top:1031.55px;width:5.80px;height:1.50px;background:#9ca3af;border-radius:0.5px;"></div>
<div style="position:absolute;left:1396.70px;top:1031.55px;width:5.80px;height:1.50px;background:#9ca3af;border-radius:0.5px;"></div>
<div class="t" style="left:1490.00px;top:1020.45px;width:67px;text-align:center;height:23.7px;line-height:23.7px;border-radius:6px;background:#2a1619;color:#e85d5d;font-size:15px;">Missing</div>
<div style="position:absolute;left:1635.20px;top:1031.55px;width:5.80px;height:1.50px;background:#9ca3af;border-radius:0.5px;"></div>
<div style="position:absolute;left:1723.50px;top:1020.30px;width:24.00px;height:24.00px;border-radius:6px;background:#1f2532;"></div>
<svg style="position:absolute;left:1728.50px;top:1025.30px;" width="14" height="14" viewBox="0 0 14 14" fill="none"><path d="M2.9 2.9l8.2 8.2M11.1 2.9l-8.2 8.2" stroke="#e5e7eb" stroke-width="1.4" stroke-linecap="round"/></svg>
<div style="position:absolute;left:234.20px;top:983.60px;width:32.00px;height:32.00px;border-radius:50%;border:1px solid #374151;background:#111827;box-sizing:border-box;"></div>
<svg style="position:absolute;left:243.00px;top:992.60px;" width="14" height="14" viewBox="0 0 24 24" fill="none"><path d="M15 6l-6 6 6 6" stroke="#e5e7eb" stroke-width="2.4" stroke-linecap="round" stroke-linejoin="round"/></svg>
</div></body></html>
